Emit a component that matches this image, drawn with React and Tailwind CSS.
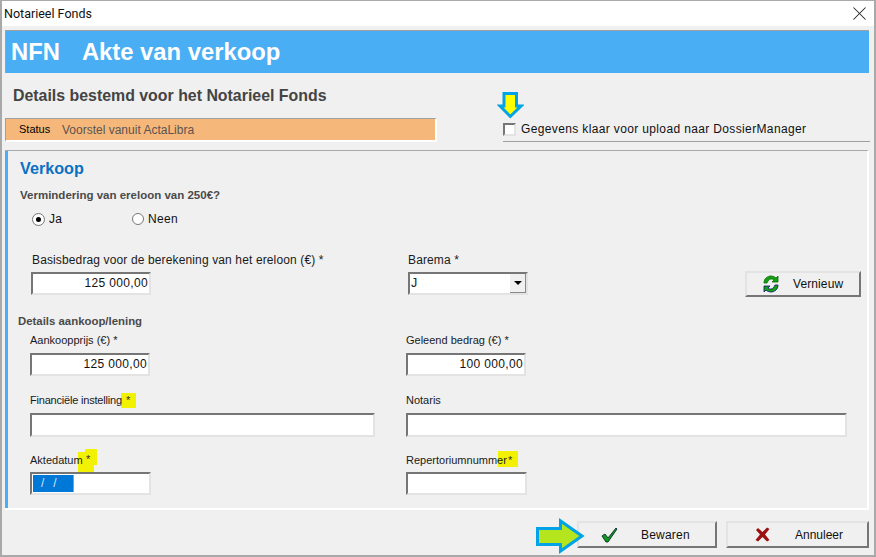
import { X } from 'lucide-react'

const font = "font-['Liberation_Sans',Arial,sans-serif]"
const inputBox = 'bg-white border-2 border-t-[#767676] border-l-[#767676] border-r-[#e3e3e3] border-b-[#e3e3e3]'
const amount = 'px-[1px] text-right text-[12px] leading-[19px] tracking-[0.35px] text-[#111]'

function Field({ label, marks, className, labelClass = '', children }) {
  return (
    <div className={`relative ${className}`}>
      {marks}
      <div className={`relative h-[20px] text-[11px] leading-[20px] text-[#1a1a1a] whitespace-nowrap ${labelClass}`}>{label}</div>
      {children}
    </div>
  )
}

// yellow highlighter stroke behind the required-field star
function Mark({ children, className }) {
  return <span className={`absolute bg-[#f2f200] text-[11px] text-[#333] ${className}`}>{children}</span>
}

function RefreshIcon() {
  return (
    <svg width="18" height="18" viewBox="0 0 18 18">
      <path d="M2 8 C2 3 6 1 9 1 C11 1 13 2 14 3 L16 1 V7 H10 L12 5 C11 4 10 4 9 4 C7 4 6 6 5 8 Z" fill="#12a012" stroke="#0b6b0b" strokeWidth="0.8" />
      <path d="M16 10 C16 15 12 17 9 17 C7 17 5 16 4 15 L2 17 V11 H8 L6 13 C7 14 8 14 9 14 C11 14 12 12 13 10 Z" fill="#12a012" stroke="#10107a" strokeWidth="0.8" />
    </svg>
  )
}

function CheckIcon() {
  return (
    <svg width="17" height="16" viewBox="0 0 17 16">
      <path d="M1 9 L4 7 L7 11 L15 1 L16 2 L7 15 H5 Z" fill="#0f9a1e" stroke="#0a2d2a" strokeWidth="0.9" />
    </svg>
  )
}

function CrossIcon() {
  return (
    <svg width="15" height="15" viewBox="0 0 15 15">
      <path d="M1 3 L3 1 L7.5 5 L12 0.5 L14.5 2 L10 7.5 L14.5 13 L12 14.5 L7.5 10 L3 14.5 L0.5 13 L5 7.5 Z" fill="#9c1010" />
    </svg>
  )
}

function Button({ icon, label, className, iconClass, labelClass }) {
  return (
    <div className={`flex items-center bg-[#f0f0f0] border-2 border-t-[#e3e3e3] border-l-[#e3e3e3] border-r-[#767676] border-b-[#767676] text-[12px] text-[#111] ${className}`}>
      <span className={iconClass}>{icon}</span>
      <span className={labelClass}>{label}</span>
    </div>
  )
}

export default function App() {
  return (
    <div className={`${font} relative w-[876px] h-[557px] bg-[#f0f0f0] border-x-2 border-b-2 border-t border-[#a9a9a9] overflow-hidden flex flex-col`}>
      {/* Title bar */}
      <div className="h-[25px] bg-white flex items-center justify-between pl-[2px] pr-[3px] shrink-0">
        <span className="pt-[1px] text-[12.5px] text-[#111] font-['Roboto','Liberation_Sans',sans-serif]">Notarieel Fonds</span>
        <X className="w-[23px] h-[23px] text-[#222]" strokeWidth={1.05} />
      </div>

      {/* Blue header */}
      <div className="mt-[4px] ml-[3px] mr-[5px] h-[43px] bg-[#4aaef5] border-t border-l border-[#a0a0a0] flex items-center pl-[5px] gap-[22px] text-white font-bold text-[23.8px] shrink-0">
        <span>NFN</span>
        <span>Akte van verkoop</span>
      </div>

      {/* Heading + status + upload */}
      <div className="flex ml-[3px] mr-[4px] h-[77px] shrink-0">
        <div className="w-[432px]">
          <div className="h-[45px] pt-[14px] pl-[8px] text-[15.9px] leading-[18px] font-bold text-[#444] whitespace-nowrap">Details bestemd voor het Notarieel Fonds</div>
          <div className="h-[24px] bg-[#f6b87a] border-t border-l border-r-2 border-b-2 border-t-[#a0a0a0] border-l-[#a0a0a0] border-r-white border-b-white flex items-center pl-[13px] text-[11px]">
            <span className="text-black w-[43px]">Status</span>
            <span className="text-[#5c5450] text-[12px]">Voorstel vanuit ActaLibra</span>
          </div>
        </div>
        <div className="ml-[66px] flex-1 pt-[48px]">
          <div className="flex items-center h-[16px] border-b border-[#a0a0a0] pb-[4px] box-content">
            <span className={`${inputBox} w-[13px] h-[13px]`} />
            <span className="ml-[5px] text-[12px] tracking-[0.36px] text-[#111]">Gegevens klaar voor upload naar DossierManager</span>
          </div>
        </div>
      </div>

      {/* Panel */}
      <div className="ml-[3px] mr-[5px] h-[360px] border-t border-[#a9a9a9] border-b-2 border-b-white border-r-2 border-r-white shrink-0 flex">
        <div className="w-[3px] bg-[#4aaef5] shrink-0" />
        <div className="flex-1 pl-[12px]">
          <div className="h-[22px] mt-[6px] text-[16.2px] leading-[22px] font-bold text-[#0a72c4]">Verkoop</div>
          <div className="mt-[8px] h-[16px] text-[11.5px] leading-[16px] font-bold text-[#4a4a4a]">Vermindering van ereloon van 250€?</div>

          <div className="mt-[7px] h-[18px] flex items-center text-[12px] text-[#111] pl-[12px]">
            <span className="w-[13px] h-[13px] rounded-full bg-white border border-[#777] flex items-center justify-center">
              <span className="w-[5px] h-[5px] rounded-full bg-black" />
            </span>
            <span className="ml-[4px] w-[83px] tracking-[0.3px]">Ja</span>
            <span className="w-[12px] h-[12px] rounded-full bg-white border border-[#777]" />
            <span className="ml-[4px] tracking-[0.3px]">Neen</span>
          </div>

          {/* Basisbedrag row */}
          <div className="mt-[22px] flex items-start pl-[12px]">
            <div className="w-[376px]">
              <div className="h-[20px] text-[12px] leading-[20px] tracking-[0.13px] text-[#1a1a1a]">Basisbedrag voor de berekening van het ereloon (€) *</div>
              <div className={`${inputBox} ${amount} mt-[2px] -ml-[1px] w-[120px] h-[23px]`}>125 000,00</div>
            </div>
            <div className="w-[337px]">
              <div className="h-[20px] text-[12px] leading-[20px] tracking-[0.13px] text-[#1a1a1a]">Barema *</div>
              <div className={`${inputBox} mt-[2px] w-[120px] h-[23px] flex items-center justify-between text-[12.5px] text-[#222] pl-[1px]`}>
                J
                <span className="w-[16px] h-[19px] bg-[#f0f0f0] border-r border-b border-[#888] flex items-center justify-center">
                  <span className="w-0 h-0 border-x-[4px] border-x-transparent border-t-[4px] border-t-black" />
                </span>
              </div>
            </div>
            <Button
              className="mt-[21px] w-[116px] h-[26px]"
              icon={<RefreshIcon />}
              iconClass="ml-[15px]"
              labelClass="ml-[13px] tracking-[0.1px]"
              label="Vernieuw"
            />
          </div>

          <div className="mt-[16px] -ml-[2px] h-[16px] text-[11.4px] leading-[16px] font-bold text-[#4a4a4a]">Details aankoop/lening</div>

          {/* Amounts */}
          <div className="mt-[1px] ml-[10px] flex">
            <Field className="w-[376px]" label="Aankoopprijs (€) *">
              <div className={`${inputBox} ${amount} mt-[3px] w-[120px] h-[23px]`}>125 000,00</div>
            </Field>
            <Field className="w-[120px]" label="Geleend bedrag (€) *">
              <div className={`${inputBox} ${amount} mt-[3px] w-[120px] h-[23px]`}>100 000,00</div>
            </Field>
          </div>

          {/* Names */}
          <div className="mt-[14px] ml-[10px] flex">
            <Field
              className="w-[376px]"
              labelClass="tracking-[-0.2px]"
              label="Financiële instelling"
              marks={<Mark className="left-[91px] top-[3px] w-[15px] h-[15px] leading-[15px] pl-[5px]">*</Mark>}
            >
              <div className={`${inputBox} mt-[3px] w-[345px] h-[24px]`} />
            </Field>
            <Field className="w-[441px]" label="Notaris">
              <div className={`${inputBox} mt-[3px] w-[441px] h-[24px]`} />
            </Field>
          </div>

          {/* Date + number */}
          <div className="mt-[13px] ml-[10px] flex">
            <Field
              className="w-[376px]"
              label="Aktedatum"
              marks={
                <>
                  <Mark className="left-[48px] top-[2px] w-[16px] h-[20px]" />
                  <Mark className="left-[55px] -top-[1px] w-[12px] h-[16px] leading-[20px] pl-[1px]">*</Mark>
                </>
              }
            >
              <div className={`${inputBox} mt-[2px] w-[121px] h-[23px] p-[1px]`}>
                <div className="w-[41px] h-[17px] bg-[#0078d7] text-[#cfe6fa] text-[12px] leading-[17px] pl-[8px] tracking-[9px] border-r border-[#e08a4a]">//</div>
              </div>
            </Field>
            <Field
              className="w-[121px]"
              label="Repertoriumnummer"
              marks={<Mark className="left-[92px] top-[1px] w-[20px] h-[16px] leading-[19px] pl-[10px]">*</Mark>}
            >
              <div className={`${inputBox} mt-[2px] w-[121px] h-[23px]`} />
            </Field>
          </div>
        </div>
      </div>

      {/* Footer buttons */}
      <div className="flex justify-end gap-[9px] mr-[5px] mt-[11px]">
        <Button className="w-[140px] h-[27px]" icon={<CheckIcon />} iconClass="ml-[22px]" labelClass="ml-[23px] tracking-[0.2px]" label="Bewaren" />
        <Button className="w-[143px] h-[27px]" icon={<CrossIcon />} iconClass="ml-[27px]" labelClass="ml-[25px]" label="Annuleer" />
      </div>

      {/* Annotation arrows */}
      <svg className="absolute left-[495px] top-[91px]" width="27" height="28" viewBox="0 0 27 28">
        <path d="M7 1.5 H19.5 V14 H24 L13.3 24.5 L3 14 H7 Z" fill="#ffff00" stroke="#00a3e8" strokeWidth="3" />
      </svg>
      <svg className="absolute left-[534px] top-[517px]" width="50" height="36" viewBox="0 0 50 36">
        <path d="M1.5 10.5 H24.5 V3 L46 18 L24.5 33 V26.5 H1.5 Z" fill="#b5e61d" stroke="#00a3e8" strokeWidth="3" />
      </svg>
    </div>
  )
}
